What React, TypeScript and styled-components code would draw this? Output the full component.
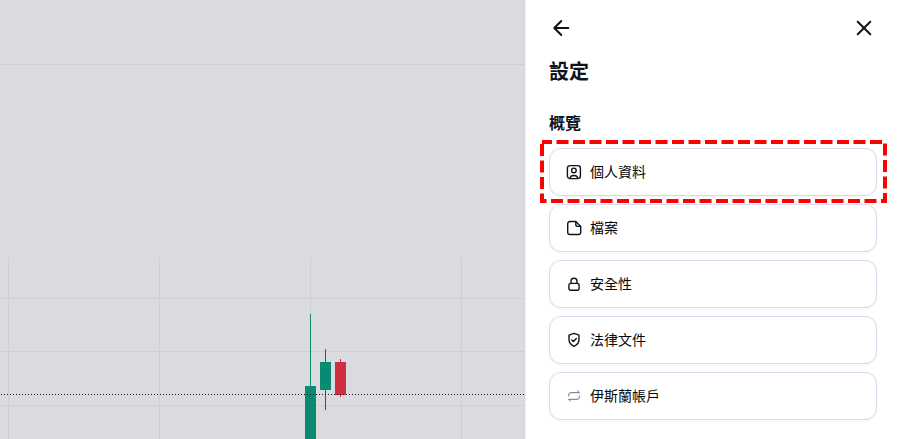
import React from "react";
import styled, { createGlobalStyle } from "styled-components";

const Global = createGlobalStyle`
  html, body { margin: 0; padding: 0; height: 100%; background: #fff; }
  #root { height: 100%; }
  * { box-sizing: border-box; }
`;

const Page = styled.div`
  display: flex;
  width: 900px;
  height: 439px;
  overflow: hidden;
  font-family: Inter, "Noto Sans CJK TC", "Noto Sans CJK JP", sans-serif;
  color: #10131c;
`;

const ChartArea = styled.div`
  flex: 0 0 525px;
  height: 100%;
  background: #d9dbdf;
`;

const ChartSvg = styled.svg`
  display: block;
`;

const Panel = styled.aside`
  flex: 1;
  display: flex;
  flex-direction: column;
  padding: 16px 23px 0 23px;
  border-left: 1px solid #eceded;
  background: #fff;
`;

const TopBar = styled.div`
  display: flex;
  justify-content: space-between;
  align-items: center;
  height: 24px;
`;

const IconButton = styled.button`
  display: flex;
  width: 24px;
  height: 24px;
  padding: 0;
  border: 0;
  background: none;
  color: #10131c;
`;

const Title = styled.h1`
  margin: 18px 0 0;
  font-size: 20px;
  line-height: 28px;
  font-weight: 700;
`;

const SectionTitle = styled.h2`
  margin: 25px 0 0;
  font-size: 16px;
  line-height: 24px;
  font-weight: 700;
`;

const Rows = styled.div`
  display: flex;
  flex-direction: column;
  gap: 8px;
  margin-top: 13px;
`;

const RowWrap = styled.div`
  position: relative;
`;

const Row = styled.div`
  display: flex;
  align-items: center;
  gap: 8px;
  height: 48px;
  padding: 0 16px;
  border: 1px solid #d3dcec;
  border-radius: 12px;
  background: #fff;
  box-shadow: 0 1px 2px rgba(30, 50, 90, 0.06);
`;

const RowLabel = styled.span`
  font-size: 14px;
  line-height: 20px;
  font-weight: 400;
  color: #05070c;
`;

const RowIcon = styled.svg<{ $muted?: boolean }>`
  flex: none;
  width: 16px;
  height: 16px;
  fill: none;
  stroke: ${(p) => (p.$muted ? "#6d7280" : "#10131c")};
  stroke-width: ${(p) => (p.$muted ? 1 : 1.4)};
  stroke-linecap: round;
  stroke-linejoin: round;
`;

const Highlight = styled.svg`
  position: absolute;
  top: -8px;
  left: -9px;
  width: 347px;
  height: 63px;
  fill: none;
  stroke: #f00;
  stroke-width: 4;
  stroke-dasharray: 12 4.5;
  stroke-dashoffset: 2;
  pointer-events: none;
`;

const items = [
  {
    label: "個人資料",
    icon: (
      <RowIcon viewBox="0 0 16 16">
        <rect x="1.4" y="1.6" width="13" height="13" rx="2.6" />
        <circle cx="7.9" cy="6.4" r="2.3" />
        <path d="M3.9 14.4c.4-2 1.9-2.9 4-2.9s3.6.9 4 2.9" />
      </RowIcon>
    ),
  },
  {
    label: "檔案",
    icon: (
      <RowIcon viewBox="0 0 16 16">
        <path d="M3.9 1.5h5.9l4.9 5.1v5.7a2.2 2.2 0 0 1-2.2 2.2H3.9a2.2 2.2 0 0 1-2.2-2.2V3.7a2.2 2.2 0 0 1 2.2-2.2z" />
        <path d="M9.8 1.7v2.7a2 2 0 0 0 2 2h2.7" />
      </RowIcon>
    ),
  },
  {
    label: "安全性",
    icon: (
      <RowIcon viewBox="0 0 16 16">
        <rect x="2.9" y="7.4" width="10.2" height="6.9" rx="2" />
        <path d="M5 7.4V5.2a3 3 0 0 1 6 0v2.2" />
      </RowIcon>
    ),
  },
  {
    label: "法律文件",
    icon: (
      <RowIcon viewBox="0 0 16 16">
        <path d="M8 1.3l5 1.8v4.5c0 3.2-2.1 5.5-5 6.8-2.9-1.3-5-3.6-5-6.8V3.1z" />
        <path d="M5.8 7.9l1.6 1.6 2.9-2.9" />
      </RowIcon>
    ),
  },
  {
    label: "伊斯蘭帳戶",
    icon: (
      <RowIcon $muted viewBox="0 0 16 16">
        <path d="M2.7 8V6.7a2 2 0 0 1 2-2h8.8l-2-2M13.3 8v1.3a2 2 0 0 1-2 2H2.5l2 2" />
      </RowIcon>
    ),
  },
];

export default function App() {
  return (
    <Page lang="zh-TW">
      <Global />
      <ChartArea>
        <ChartSvg width="525" height="439" viewBox="0 0 525 439">
          <g stroke="#cdcfd4" strokeWidth="1" shapeRendering="crispEdges">
            <path d="M0 64.5H525M0 298.5H525M0 351.5H525M0 405.5H525" />
            <path d="M8.5 257V439M159.5 257V439M310.5 257V439M461.5 257V439" />
          </g>
          <g shapeRendering="crispEdges">
            <rect x="310" y="314" width="1" height="72" fill="#0a8a72" />
            <rect x="305" y="386" width="11" height="53" fill="#0a8a72" />
            <rect x="325" y="349" width="1" height="61" fill="#0a6f5e" />
            <rect x="320" y="362" width="11" height="28" fill="#0a8a72" />
            <rect x="340" y="359" width="1" height="38" fill="#cf3041" />
            <rect x="335" y="362" width="11" height="33" fill="#cf3041" />
          </g>
          <line x1="1" y1="394.5" x2="525" y2="394.5" stroke="#10131c" strokeWidth="1" strokeDasharray="1 2" shapeRendering="crispEdges" />
        </ChartSvg>
      </ChartArea>
      <Panel>
        <TopBar>
          <IconButton aria-label="back">
            <svg width="24" height="24" viewBox="0 0 24 24" fill="none" stroke="currentColor" strokeWidth="2" strokeLinecap="round" strokeLinejoin="round">
              <path d="M19.3 12H5.3M12.3 5L5.3 12l7 7" />
            </svg>
          </IconButton>
          <IconButton aria-label="close">
            <svg width="24" height="24" viewBox="0 0 24 24" fill="none" stroke="currentColor" strokeWidth="2" strokeLinecap="round" strokeLinejoin="round">
              <path d="M4.7 5.7L17.3 18.3M17.3 5.7L4.7 18.3" />
            </svg>
          </IconButton>
        </TopBar>
        <Title>設定</Title>
        <SectionTitle>概覽</SectionTitle>
        <Rows>
          {items.map((it, i) => (
            <RowWrap key={it.label}>
              <Row>
                {it.icon}
                <RowLabel>{it.label}</RowLabel>
              </Row>
              {i === 0 && (
                <Highlight viewBox="0 0 347 63">
                  <rect x="2" y="2" width="343" height="59" />
                </Highlight>
              )}
            </RowWrap>
          ))}
        </Rows>
      </Panel>
    </Page>
  );
}
